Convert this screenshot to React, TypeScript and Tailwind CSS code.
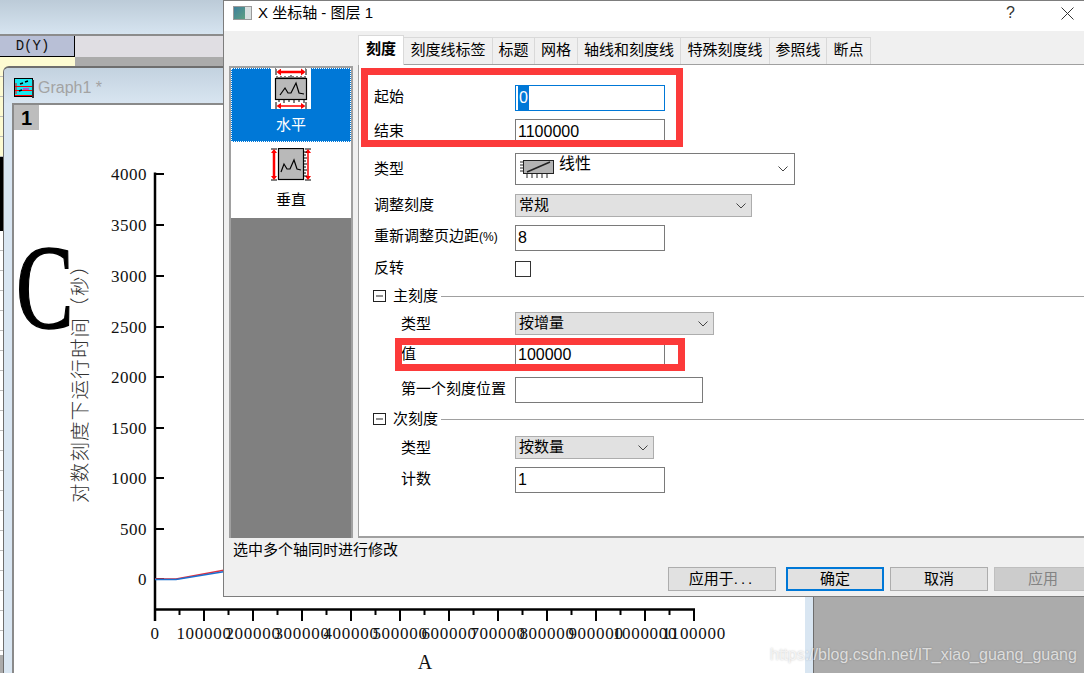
import type { ReactNode } from "react";

const sans = "font-['Liberation_Sans','Noto_Sans_CJK_SC',sans-serif]";

const tabs = [
  { label: "刻度线标签", w: "w-[89px]" },
  { label: "标题", w: "w-[42px]" },
  { label: "网格", w: "w-[43px]" },
  { label: "轴线和刻度线", w: "w-[103px]" },
  { label: "特殊刻度线", w: "w-[89px]" },
  { label: "参照线", w: "w-[57px]" },
  { label: "断点", w: "w-[44px]" },
];

const yTicks = [
  ["4000", 174],
  ["3500", 225],
  ["3000", 276],
  ["2500", 327],
  ["2000", 377],
  ["1500", 428],
  ["1000", 478],
  ["500", 529],
  ["0", 579],
] as const;

const xLabels = ["0", "100000", "200000", "300000", "400000", "500000", "600000", "700000", "800000", "900000", "1000000", "1100000"];

function Chevron() {
  return (
    <svg width="10" height="6" viewBox="0 0 10 6" className="shrink-0">
      <path d="M0.5 0.5 L5 5 L9.5 0.5" fill="none" stroke="#444" strokeWidth="1" />
    </svg>
  );
}

function Label({ children, nested, offset = "-mt-[3px]" }: { children: ReactNode; nested?: boolean; offset?: string }) {
  return (
    <div className={`${nested ? "w-[141px] pl-[27px]" : "w-[141px]"} ${offset} whitespace-nowrap text-[15px] leading-[20px] text-black`}>
      {children}
    </div>
  );
}

function Field({ value, w = "w-[150px]", h = "h-[26px]" }: { value?: string; w?: string; h?: string }) {
  return (
    <div className={`${w} ${h} flex items-center border border-[#7a7a7a] bg-white pl-[2px] text-[16px] text-black`}>
      {value}
    </div>
  );
}

function Combo({ value, w }: { value: string; w: string }) {
  return (
    <div className={`${w} flex h-[23px] items-center justify-between border border-[#adadad] bg-[#e1e1e1] pl-[3px] pr-[5px] text-[15px] text-black`}>
      <span>{value}</span>
      <Chevron />
    </div>
  );
}

function Section({ title, className }: { title: string; className: string }) {
  return (
    <div className={`flex h-[12px] items-center ${className}`}>
      <svg width="13" height="12" viewBox="0 0 13 12" className="shrink-0">
        <rect x="0.5" y="0.5" width="12" height="11" fill="white" stroke="#222" />
        <path d="M3 6 H10" stroke="#222" />
      </svg>
      <span className="ml-[7px] whitespace-nowrap text-[15px] leading-[20px] text-black">{title}</span>
      <div className="ml-[3px] h-px flex-1 bg-[#a0a0a0]" />
    </div>
  );
}

function DialogButton({ children, className }: { children: ReactNode; className: string }) {
  return (
    <div className={`flex h-[24px] items-center justify-center text-[15px] ${className}`}>{children}</div>
  );
}

function HorizontalIcon() {
  return (
    <svg width="40" height="41" viewBox="0 0 40 41" className="block shrink-0">
      <rect width="40" height="41" fill="white" />
      <path d="M5 0 V7 M35 0 V7 M5 34 V41 M35 34 V41" stroke="black" />
      <path d="M7 4 H33" stroke="#f00" strokeWidth="2.5" />
      <path d="M10 0.5 L5.5 4 L10 7.5 Z M30 0.5 L34.5 4 L30 7.5 Z" fill="#f00" />
      <path d="M7 38 H33" stroke="#f00" strokeWidth="1.5" />
      <path d="M10 35 L5.5 38 L10 41 Z M30 35 L34.5 38 L30 41 Z" fill="#f00" />
      <path d="M6 8 V10 M8 9 V10 M10 8 V10 M12 9 V10 M14 8 V10 M16 9 V10 M18 8 V10 M20 7 V10 M22 8 V10 M24 9 V10 M26 8 V10 M28 9 V10 M30 8 V10 M32 9 V10 M34 8 V10" stroke="black" />
      <rect x="4.5" y="10.5" width="31" height="21" fill="#b9b9b9" stroke="black" strokeWidth="1.2" />
      <path d="M9 27 L14 20 L17 25 L20 25 L25 15 L28 25 L33 26" fill="none" stroke="black" strokeWidth="1.2" />
      <path d="M8 32 V34 M13 32 V35 M18 32 V34 M23 32 V35 M28 32 V34 M33 32 V35" stroke="black" />
    </svg>
  );
}

function VerticalIcon() {
  return (
    <svg width="40" height="33" viewBox="0 0 40 33" className="block shrink-0">
      <path d="M0 1 H6 M0 32 H6 M34 1 H40 M34 32 H40" stroke="black" />
      <path d="M3 3 V30" stroke="#f00" strokeWidth="2.5" />
      <path d="M0 5 L3 1 L6 5 Z M0 28 L3 32 L6 28 Z" fill="#f00" />
      <path d="M37 3 V30" stroke="#f00" strokeWidth="1.5" />
      <path d="M34 5 L37 1 L40 5 Z M34 28 L37 32 L40 28 Z" fill="#f00" />
      <rect x="7.5" y="0.5" width="25" height="31" fill="#b9b9b9" stroke="black" strokeWidth="1.2" />
      <path d="M10 24 L13 16 L16 21 L19 21 L23 12 L26 21 L30 22" fill="none" stroke="black" strokeWidth="1.2" />
      <path d="M33 4 H36 M33 7 H35 M33 10 H36 M33 13 H35 M33 16 H36 M33 19 H35 M33 22 H36 M33 25 H35 M33 28 H36" stroke="black" />
    </svg>
  );
}

function LinearIcon() {
  return (
    <svg width="35" height="20" viewBox="0 0 35 20" className="shrink-0">
      <rect x="3.5" y="1.5" width="30" height="13" fill="#b4b4b4" stroke="#222" />
      <path d="M7 13 L30 3" stroke="#222" strokeWidth="1.5" />
      <path d="M0 3 H3 M0 6 H3 M0 9 H3 M0 12 H3 M7 15 V19 M12 15 V19 M17 15 V19 M22 15 V19 M27 15 V19" stroke="#222" />
    </svg>
  );
}

function GraphIcon() {
  return (
    <svg width="20" height="20" viewBox="0 0 20 20" className="shrink-0">
      <rect x="0.5" y="0.5" width="18" height="18" fill="#19e6ee" stroke="black" />
      <rect x="18" y="2" width="2" height="18" fill="#333" />
      <path d="M1 17.5 H18 M2 5 V16 M1 8.5 H18 M1 12.5 H18" stroke="#f00" />
      <path d="M6 6 L9 5 M11 4 L14 3 M5 13 L8 12" stroke="black" strokeWidth="1.5" />
      <path d="M9 11 H15" stroke="#e020c0" strokeWidth="1.5" />
    </svg>
  );
}

function Plot() {
  return (
    <svg width="804" height="568" viewBox="0 0 804 568" className="block shrink-0">
      {/* drawn in page coordinates, the plot area starts at (14,105) */}
      <g transform="translate(-14 -105)">
        <path d="M155 172.5 V621" stroke="black" strokeWidth="2.5" fill="none" />
        <path d="M154 609.5 H695" stroke="black" strokeWidth="2.5" fill="none" />
        {yTicks.map(([t, y]) => (
          <g key={t}>
            <path d={`M155 ${y} H164`} stroke="black" strokeWidth="2" />
            <text x="147" y={y + 5.5} textAnchor="end" fontSize="17" letterSpacing="0.5" fontFamily="'Liberation Serif', serif" fill="#111">
              {t}
            </text>
          </g>
        ))}
        {xLabels.map((t, i) => (
          <g key={t}>
            <path d={`M${155 + i * 49} 610 V621`} stroke="black" strokeWidth="2" />
            {i < 11 && <path d={`M${179.5 + i * 49} 610 V615`} stroke="black" strokeWidth="2" />}
            <text x={155 + i * 49} y="639" textAnchor="middle" fontSize="17" letterSpacing="0.7" fontFamily="'Liberation Serif', serif" fill="#111">
              {t}
            </text>
          </g>
        ))}
        <path d="M155 579 H176 L225 570" stroke="#e03040" strokeWidth="1.5" fill="none" />
        <path d="M155 579.5 H176 L225 571.5" stroke="#1b6fd0" strokeWidth="1.5" fill="none" />
        <text x="425" y="669" textAnchor="middle" fontSize="20" fontFamily="'Liberation Serif', serif" fill="#111">
          A
        </text>
        <text
          transform="translate(87 503) rotate(-90)"
          fontSize="19.5"
          letterSpacing="1.2"
          fontFamily="'Noto Sans CJK SC', sans-serif"
          fontWeight="300"
          fill="#333"
        >
          对数刻度下运行时间（秒）
        </text>
        <text transform="translate(16 328) scale(0.72 1)" fontSize="120" fontFamily="'Liberation Serif', serif" fill="black" stroke="black" strokeWidth="1.5">
          C
        </text>
      </g>
    </svg>
  );
}

function SheetStrip() {
  return (
    <div className="flex w-[75px] flex-col">
      <div className="h-[100px] bg-[repeating-linear-gradient(#fdfbd2_0,#fdfbd2_19px,#bdbdbd_19px,#bdbdbd_20px)]" />
      <div className="h-[74px] bg-black" />
      <div className="h-[424px] bg-[repeating-linear-gradient(#ffffff_0,#ffffff_19px,#bdbdbd_19px,#bdbdbd_20px)]" />
      <div className="flex-1 bg-[#b5b5b5]" />
    </div>
  );
}

export default function App() {
  return (
    <div className={`relative h-[673px] w-[1084px] overflow-hidden bg-[#ababab] ${sans}`}>
      {/* workbook window behind */}
      <div className="flex h-full flex-col">
        <div className="h-[36px] border-b-2 border-[#8c8c8c] bg-gradient-to-b from-[#bccbd8] to-[#d6e4f0]" />
        <div className="flex h-[21px] bg-[#e0dee3]">
          <div className="flex w-[75px] items-center justify-center border-r border-b border-black bg-[#b8bfd6] pr-[9px] text-[14px] font-['Liberation_Mono',monospace] text-[#111]">
            D(Y)
          </div>
        </div>
        <SheetStrip />
      </div>

      {/* graph window */}
      <div className="absolute left-[3px] top-[66px] flex h-[607px] w-[811px] flex-col overflow-hidden rounded-tl-[6px] border-l border-r border-t-2 border-[#6e6e6e] bg-[#d9e6f2]">
        <div className="flex h-[35px] shrink-0 items-center bg-gradient-to-b from-[#c3d2df] to-[#d8e5f1] pl-[10px] pt-[5px]">
          <GraphIcon />
          <span className="ml-[4px] text-[16px] text-[#a3a3a3]">Graph1 *</span>
        </div>
        <div className="ml-[8px] mr-[8px] flex-1 overflow-hidden border-l-2 border-t-2 border-[#8a8a8a] bg-white">
          <div className="flex h-[25px] w-[25px] items-center justify-center bg-[#bdbdbd] text-[20px] font-bold text-black">1</div>
          <div className="-mt-[25px]">
            <Plot />
          </div>
        </div>
      </div>

      {/* axis dialog */}
      <div className="absolute left-[223px] top-0 flex h-[597px] w-[880px] flex-col border border-[#7d7d7d] bg-[#f0f0f0]">
        <div className="flex h-[30px] shrink-0 items-center bg-white pb-[6px] pl-[9px]">
          <div className="flex h-[14px] w-[19px] border border-[#9a9a9a] bg-[#d9e0e0]">
            <div className="h-full w-[11px] bg-gradient-to-br from-[#3f7f9a] to-[#5fa080]" />
          </div>
          <span className="ml-[6px] whitespace-nowrap text-[15px] text-black">X 坐标轴 - 图层 1</span>
          <span className="ml-[633px] text-[16px] text-[#333]">?</span>
          <svg width="13" height="13" viewBox="0 0 13 13" className="ml-[46px]">
            <path d="M0.5 0.5 L12.5 12.5 M12.5 0.5 L0.5 12.5" stroke="#333" />
          </svg>
        </div>

        <div className="flex h-[507px] shrink-0">
          {/* category list */}
          <div className="ml-[5px] mt-[35px] flex w-[124px] flex-col border-2 border-b-0 border-[#a0a0a0] bg-[#808080]">
            <div className="flex h-[74px] flex-col items-center bg-[#0078d7] text-[15px] text-white outline-1 -outline-offset-1 outline-dotted outline-white">
              <HorizontalIcon />
              <span className="mt-[6px] leading-[20px]">水平</span>
            </div>
            <div className="flex h-[76px] flex-col items-center bg-white pt-[6px] text-[15px] text-black">
              <VerticalIcon />
              <span className="mt-[9px] leading-[20px]">垂直</span>
            </div>
          </div>

          {/* tabs and page */}
          <div className="ml-[5px] flex flex-1 flex-col pt-[4px]">
            <div className="flex h-[29px] shrink-0 items-end">
              <div className="z-10 -mb-px flex h-[30px] w-[46px] items-center justify-center border border-b-0 border-[#d9d9d9] bg-white pb-[3px] text-[15px] font-bold text-black">
                刻度
              </div>
              {tabs.map((t) => (
                <div key={t.label} className={`${t.w} flex h-[27px] items-center justify-center border-r border-t border-[#d9d9d9] pb-[2px] text-[15px] text-black`}>
                  {t.label}
                </div>
              ))}
            </div>
            <div className="flex-1 border-l border-t border-b-2 border-[#a0a0a0] bg-white pl-[15px] pt-[20px]">
              <div className="flex h-[26px] items-center">
                <Label>起始</Label>
                <div className="flex h-[26px] w-[150px] items-center border border-[#0078d7] pl-[2px] text-[16px]">
                  <span className="bg-[#0078d7] px-px text-white">0</span>
                </div>
              </div>
              <div className="mt-[8px] flex h-[26px] items-center">
                <Label>结束</Label>
                <Field value="1100000" />
              </div>
              <div className="mt-[8px] flex h-[32px] items-center">
                <Label offset="-mt-[1px]">类型</Label>
                <div className="flex h-[32px] w-[280px] items-center justify-between border border-[#7a7a7a] pl-[4px] pr-[6px] text-[16px]">
                  <div className="flex items-start">
                    <LinearIcon />
                    <span className="-mt-[7px] ml-[4px]">线性</span>
                  </div>
                  <Chevron />
                </div>
              </div>
              <div className="mt-[9px] flex h-[23px] items-center">
                <Label offset="-mt-[1px]">调整刻度</Label>
                <Combo value="常规" w="w-[237px]" />
              </div>
              <div className="mt-[8px] flex h-[26px] items-center">
                <Label>
                  重新调整页边距<span className="text-[12px]">(%)</span>
                </Label>
                <Field value="8" />
              </div>
              <div className="mt-[10px] flex h-[16px] items-center">
                <Label>反转</Label>
                <div className="h-[16px] w-[16px] border border-[#333] bg-white" />
              </div>
              <Section title="主刻度" className="mt-[13px] -ml-px" />
              <div className="mt-[10px] flex h-[23px] items-center">
                <Label nested offset="mt-0">类型</Label>
                <Combo value="按增量" w="w-[199px]" />
              </div>
              <div className="mt-[7px] flex h-[26px] items-center">
                <Label nested>值</Label>
                <Field value="100000" />
              </div>
              <div className="mt-[9px] flex h-[26px] items-center">
                <Label nested>第一个刻度位置</Label>
                <Field w="w-[188px]" />
              </div>
              <Section title="次刻度" className="mt-[10px] -ml-px" />
              <div className="mt-[11px] flex h-[23px] items-center">
                <Label nested offset="mt-0">类型</Label>
                <Combo value="按数量" w="w-[139px]" />
              </div>
              <div className="mt-[8px] flex h-[26px] items-center">
                <Label nested>计数</Label>
                <Field value="1" />
              </div>
            </div>
          </div>
        </div>

        <div className="pl-[9px] pt-[2px] text-[15px] leading-[20px] text-black">选中多个轴同时进行修改</div>
        <div className="ml-[444px] mt-[7px] flex">
          <DialogButton className="w-[108px] border border-[#adadad] bg-[#e1e1e1] text-black">
            应用于<span className="tracking-[3px]">...</span>
          </DialogButton>
          <DialogButton className="ml-[10px] w-[98px] border-2 border-[#0078d7] bg-[#e1e1e1] text-black">确定</DialogButton>
          <DialogButton className="ml-[6px] w-[98px] border border-[#adadad] bg-[#e1e1e1] text-black">取消</DialogButton>
          <DialogButton className="ml-[6px] w-[98px] border border-[#bfbfbf] bg-[#cccccc] text-[#838383]">应用</DialogButton>
        </div>
      </div>

      {/* red annotation boxes */}
      <div className="absolute left-[361px] top-[68px] h-[79px] w-[322px] border-[7px] border-[#fc3a3a]" />
      <div className="absolute left-[395px] top-[338px] h-[33px] w-[290px] border-[7px] border-[#fc3a3a]" />

      {/* watermark */}
      <div className="absolute left-[770px] top-[645px] whitespace-nowrap text-[16px] leading-[20px] text-white/70 [text-shadow:0_0_2px_rgba(0,0,0,0.25)]">
        https://blog.csdn.net/IT_xiao_guang_guang
      </div>
    </div>
  );
}
